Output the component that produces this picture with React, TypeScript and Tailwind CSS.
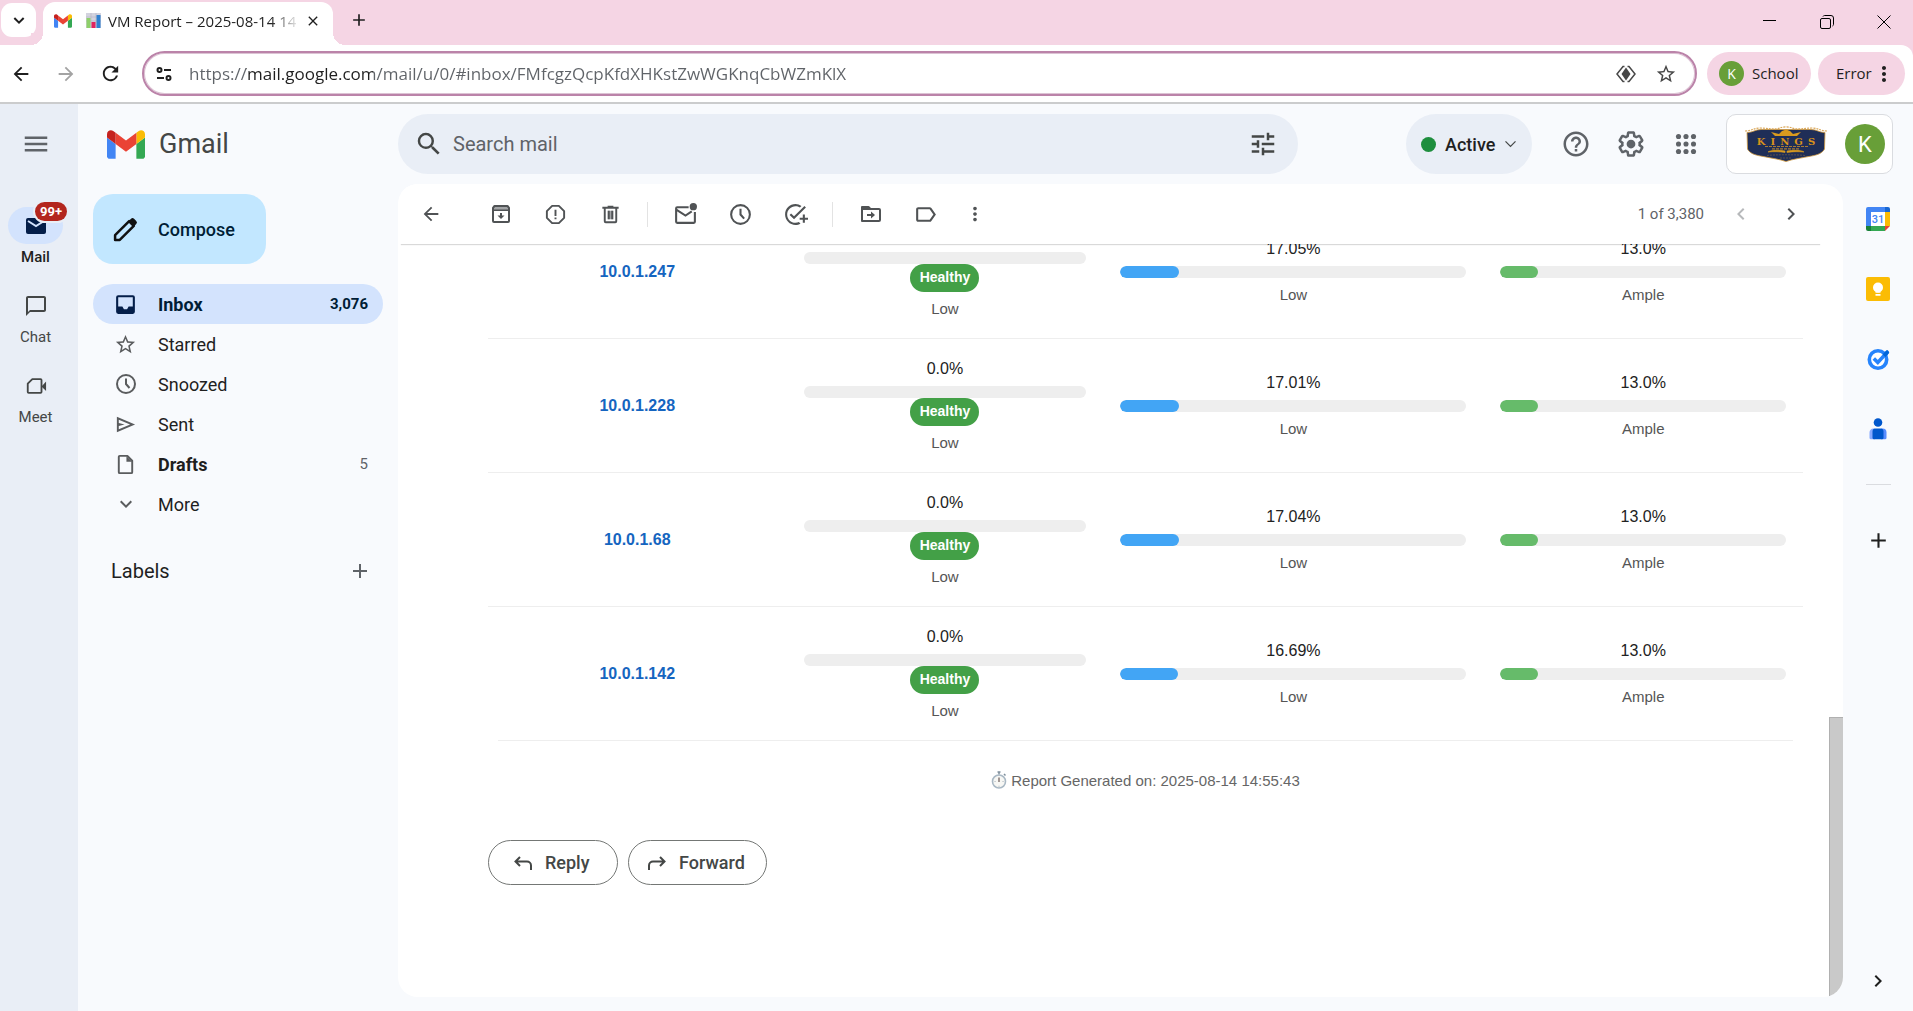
import type { ReactNode } from "react";
import {
  MdAdd,
  MdArrowBack,
  MdArrowForward,
  MdChatBubbleOutline,
  MdChevronLeft,
  MdChevronRight,
  MdClose,
  MdExpandMore,
  MdHelpOutline,
  MdLabelOutline,
  MdMenu,
  MdMoreVert,
  MdOutlineAddTask,
  MdRefresh,
  MdSearch,
  MdStarBorder,
  MdTune,
} from "react-icons/md";

type Draw = { className?: string; children?: ReactNode };

function Glyph({ className, children }: Draw) {
  return (
    <svg viewBox="0 0 24 24" fill="none" stroke="currentColor" strokeWidth="2" className={className} aria-hidden="true">
      {children}
    </svg>
  );
}

function GmailLogo({ className }: Draw) {
  return (
    <svg viewBox="52 42 88 66" className={className} aria-hidden="true">
      <path fill="#4285f4" d="M58 108h14V74L52 59v43c0 3.32 2.69 6 6 6" />
      <path fill="#34a853" d="M120 108h14c3.32 0 6-2.69 6-6V59l-20 15" />
      <path fill="#fbbc04" d="M120 48v26l20-15v-8c0-7.42-8.47-11.65-14.4-7.2" />
      <path fill="#ea4335" d="M72 74V48l24 18 24-18v26L96 92" />
      <path fill="#c5221f" d="M52 51v8l20 15V48l-5.6-4.2c-5.94-4.45-14.4-.22-14.4 7.2" />
    </svg>
  );
}

function ChartEmoji() {
  return (
    <svg viewBox="0 0 15 15" className="h-[15px] w-[15px] shrink-0" aria-hidden="true">
      <rect width="15" height="15" fill="#d3d3de" />
      <path d="M0 4h15M0 8h15M5 0v15M10 0v15" stroke="#b4b4c4" strokeWidth="0.6" />
      <rect x="0.5" y="5" width="4" height="10" fill="#8fd06a" />
      <rect x="5.5" y="9" width="4" height="6" fill="#e0245e" />
      <rect x="10.5" y="2" width="4" height="13" fill="#2f80d0" />
    </svg>
  );
}

function Stopwatch() {
  return (
    <svg viewBox="0 0 16 18" className="h-[18px] w-4" aria-hidden="true">
      <path d="M8 0.5v3M6.5 1h3M13 3l1.5 1.5" stroke="#7f8f9c" strokeWidth="1.5" fill="none" />
      <circle cx="8" cy="10.5" r="6.5" fill="#f7f7f4" stroke="#a9b8c4" strokeWidth="1.6" />
      <path d="M8 6.5v4.5" stroke="#5b4a45" strokeWidth="1.1" />
      <path d="M8 14.8v.9M3.6 10.5h.9M11.6 10.5h.9" stroke="#8b98a3" strokeWidth="0.8" />
    </svg>
  );
}

const ClockIcon = ({ className }: Draw) => (
  <Glyph className={className}>
    <circle cx="12" cy="12" r="9" />
    <path d="M12 6.5V12l3.5 4" />
  </Glyph>
);

const ArchiveIcon = ({ className }: Draw) => (
  <Glyph className={className}>
    <path d="M4 5h16v3.5H4z" fill="#a3a5a7" stroke="none" />
    <path d="M5.5 4h13L20 5.8V19a1 1 0 0 1-1 1H5a1 1 0 0 1-1-1V5.8z" strokeLinejoin="round" />
    <path d="M4 8.2h16" strokeWidth="1.4" />
    <path d="M12 11v3" />
    <path d="M8.500 13.500h7L12 17z" fill="currentColor" stroke="none" />
  </Glyph>
);

const SpamIcon = ({ className }: Draw) => (
  <Glyph className={className}>
    <path d="M8.500 3h7l5.500 5.500v7L15.500 21h-7L3 15.500v-7z" strokeLinejoin="round" />
    <path d="M12 7v6.500M12 15v2" />
  </Glyph>
);

const TrashIcon = ({ className }: Draw) => (
  <Glyph className={className}>
    <path d="M6 6v13a1 1 0 0 0 1 1h10a1 1 0 0 0 1-1V6M3.500 5h17M9 3.800h6" />
    <path d="M9 8h6v9H9z" fill="#a3a5a7" stroke="none" />
    <path d="M10.200 8v9M13.800 8v9" />
  </Glyph>
);

const UnreadIcon = ({ className }: Draw) => (
  <Glyph className={className}>
    <path d="M15 5H4a1 1 0 0 0-1 1v13a1 1 0 0 0 1 1h16a1 1 0 0 0 1-1V9.500" />
    <path d="M3.500 7.500 12 13l6-4" />
    <circle cx="19.500" cy="4.500" r="3.500" fill="currentColor" stroke="none" />
  </Glyph>
);

const MoveIcon = ({ className }: Draw) => (
  <Glyph className={className}>
    <path d="M3 19V5h6.500l2 2H20a1 1 0 0 1 1 1v10a1 1 0 0 1-1 1z" strokeLinejoin="round" />
    <path d="M3 5h6.500l2 3H3z" fill="currentColor" stroke="none" />
    <path d="M8 13h5" />
    <path d="M12 9.500v7l4-3.500z" fill="currentColor" stroke="none" />
  </Glyph>
);

const InboxIcon = ({ className }: Draw) => (
  <svg viewBox="0 0 24 24" className={className} fill="currentColor" aria-hidden="true">
    <path d="M19 3H5a2 2 0 0 0-2 2v14a2 2 0 0 0 2 2h14a2 2 0 0 0 2-2V5a2 2 0 0 0-2-2zm0 11h-4l-1.500 2.500h-3L9 14H5V5h14z" />
  </svg>
);

const SendIcon = ({ className }: Draw) => (
  <svg viewBox="0 0 24 24" className={className} fill="currentColor" aria-hidden="true">
    <path d="M3 20V4l19 8zm2-3 11.850-5L5 7v3.500l6 1.500-6 1.500z" />
  </svg>
);

const DraftIcon = ({ className }: Draw) => (
  <Glyph className={className}>
    <path d="M14 3H6a1 1 0 0 0-1 1v16a1 1 0 0 0 1 1h12a1 1 0 0 0 1-1V8z" strokeLinejoin="round" />
    <path d="M13 3v6h6z" fill="currentColor" stroke="none" />
  </Glyph>
);

const MeetIcon = ({ className }: Draw) => (
  <Glyph className={className}>
    <path d="M8 4.500h9a1 1 0 0 1 1 1v13a1 1 0 0 1-1 1H4a1 1 0 0 1-1-1V9.500z" strokeLinejoin="round" />
    <path d="M18 12.500 23 7v10.500z" fill="currentColor" stroke="none" />
  </Glyph>
);

const MailIcon = ({ className }: Draw) => (
  <svg viewBox="0 0 24 24" className={className} aria-hidden="true">
    <rect x="2" y="4" width="20" height="16" rx="2" fill="#041e49" />
    <path d="M4 7l8 5 8-5" stroke="#d3e3fd" strokeWidth="2" fill="none" />
  </svg>
);

const PencilIcon = ({ className }: Draw) => (
  <svg viewBox="0 0 24 24" className={className} aria-hidden="true">
    <path d="M2 17.500 15.500 4l4.500 4.500L6.500 22H2z" fill="none" stroke="#111" strokeWidth="2.400" strokeLinejoin="round" />
    <path d="M14.500 4.500 17.300 1.700a2 2 0 0 1 2.900 0l2.100 2.100a2 2 0 0 1 0 2.900l-2.800 2.800z" fill="#111" />
  </svg>
);

const GearIcon = ({ className }: Draw) => (
  <svg viewBox="0 0 24 24" className={className} fill="currentColor" aria-hidden="true">
    <path d="M13.850 22.250h-3.700c-.74 0-1.360-.54-1.450-1.270l-.27-1.890c-.27-.14-.53-.29-.79-.46l-1.800.72c-.7.260-1.470-.03-1.810-.65L2.200 15.530c-.35-.66-.2-1.440.36-1.880l1.530-1.190c-.01-.15-.02-.3-.02-.46 0-.15.01-.31.020-.46l-1.520-1.190c-.59-.45-.74-1.260-.37-1.880l1.850-3.190c.34-.62 1.110-.9 1.790-.63l1.810.730c.26-.17.520-.32.780-.46l.27-1.910c.09-.7.710-1.250 1.440-1.250h3.700c.74 0 1.360.54 1.450 1.270l.27 1.890c.27.14.53.29.79.46l1.800-.72c.71-.26 1.480.03 1.820.65l1.840 3.180c.36.66.2 1.440-.36 1.880l-1.520 1.190c.01.15.02.3.020.46s-.01.31-.02.46l1.520 1.190c.56.45.72 1.230.37 1.860l-1.860 3.220c-.34.62-1.110.9-1.800.63l-1.800-.72c-.26.17-.52.32-.78.46l-.27 1.910c-.1.680-.72 1.220-1.460 1.220zm-3.230-2h2.760l.37-2.550.53-.22c.44-.18.880-.44 1.340-.78l.45-.34 2.380.96 1.380-2.400-2.030-1.580.07-.56c.03-.26.06-.51.06-.78s-.03-.53-.06-.78l-.07-.56 2.030-1.580-1.390-2.400-2.390.96-.45-.35c-.42-.32-.87-.58-1.330-.77l-.52-.22-.37-2.550h-2.760l-.37 2.550-.53.21c-.44.19-.88.44-1.340.79l-.45.33-2.380-.95-1.390 2.390 2.030 1.580-.07.56a7 7 0 0 0-.06.79c0 .26.02.53.06.78l.07.56-2.030 1.580 1.380 2.400 2.390-.96.45.35c.43.33.86.58 1.330.77l.53.22z" />
    <circle cx="12" cy="12" r="3.500" />
  </svg>
);

const AppsIcon = ({ className }: Draw) => (
  <svg viewBox="0 0 24 24" className={className} fill="currentColor" aria-hidden="true">
    {[6, 12, 18].map((y) => [6, 12, 18].map((x) => <circle key={`${x}-${y}`} cx={x} cy={y} r="2.050" />))}
  </svg>
);

function CalendarLogo() {
  return (
    <svg viewBox="0 0 24 24" className="size-6" aria-hidden="true">
      <path d="M2 0h17v5H5v14H0V2a2 2 0 0 1 2-2z" fill="#4285f4" />
      <path d="M19 0h3a2 2 0 0 1 2 2v3h-5z" fill="#1967d2" />
      <path d="M19 5h5v14h-5z" fill="#fbbc04" />
      <path d="M5 19h14v5H5z" fill="#34a853" />
      <path d="M0 19h5v5H2a2 2 0 0 1-2-2z" fill="#188038" />
      <path d="M19 19h5l-5 5z" fill="#ea4335" />
      <rect x="5" y="5" width="14" height="14" fill="#fff" />
      <text x="12" y="16" textAnchor="middle" fontSize="11" fontWeight="500" fontFamily="Roboto, sans-serif" fill="#4285f4">
        31
      </text>
    </svg>
  );
}

function KeepLogo() {
  return (
    <svg viewBox="0 0 24 24" className="size-6" aria-hidden="true">
      <rect width="24" height="24" rx="2" fill="#fbbc04" />
      <circle cx="12" cy="10.500" r="5" fill="#fff" />
      <path d="M9.500 13h5v2.800h-5zM9.500 17h5v1.800h-5z" fill="#fff" />
    </svg>
  );
}

function TasksLogo() {
  return (
    <svg viewBox="0 0 24 24" className="size-6" aria-hidden="true">
      <circle cx="12" cy="12.500" r="8.700" fill="#fff" stroke="#2684fc" strokeWidth="3.600" />
      <path d="M7.800 11.500l4 4L21 5.500" fill="none" stroke="#2684fc" strokeWidth="3.600" />
      <path d="M16.500 7.500l3.500-3.800a1.500 1.500 0 0 1 2.200 0l.6.700a1.500 1.500 0 0 1 0 2L19.500 10z" fill="#0066da" />
    </svg>
  );
}

function ContactsLogo() {
  return (
    <svg viewBox="0 0 24 24" className="size-6" aria-hidden="true">
      <circle cx="12" cy="5.500" r="4.300" fill="#0057cc" />
      <path d="M7.500 11.500H9v10.700H5a1.500 1.500 0 0 1-1.500-1.500v-5a4 4 0 0 1 4-4.200z" fill="#86a9ff" />
      <path d="M15 11.500h1.500a4 4 0 0 1 4 4v5.200a1.500 1.500 0 0 1-1.500 1.500h-4z" fill="#578cff" />
      <path d="M9.500 11.500h5a3 3 0 0 1 3 3v6.200a1.500 1.500 0 0 1-1.500 1.500H8a1.500 1.500 0 0 1-1.500-1.500v-6.200a3 3 0 0 1 3-3z" fill="#0057cc" />
    </svg>
  );
}

function SchoolCrest() {
  return (
    <svg viewBox="0 0 82 36" className="h-9 w-[82px]" role="img" aria-label="Kings school crest">
      <path
        d="M2 6.500C8 6.500 10 3.500 16 3.500h50c6 0 8 3 14 3l-.5 16.500c-2 4-7 6-13 7-10 2-18 3-25.500 5.500-7.500-2.500-15.500-3.500-25.500-5.500-6-1-11-3-13-7z"
        fill="#1f2e57"
        stroke="#d0993f"
        strokeWidth="0.8"
      />
      <path d="M0 5c6 0 9-3 15-3 8 0 14 2 20 0 3-1.500 9-1.500 12 0 6 2 12 0 20 0 6 0 9 3 15 3" fill="none" stroke="#dba85a" strokeWidth="1.200" strokeDasharray="2 1" />
      <path d="M30 10l-4-4 8 2 3-3 4-1.500L45 5l3 3 8-2-4 4z" fill="#d99a1f" />
      <text x="41" y="18.500" textAnchor="middle" fontSize="10" fontWeight="700" fontFamily="DejaVu Serif, serif" fill="#d8921a">
        {"K\u2002I\u2002N\u2002G\u2002S"}
      </text>
      <path d="M20 20.500h43M27 22.800h28" stroke="#a87a33" strokeWidth="1.200" strokeDasharray="3 1" />
      <path d="M23 26c2-2 12-2 17-1v1.500c-6-1-11-1-17-.5zM42 25c5-1 15-1 17 1-6-.5-11-.5-17 .5z" fill="#d99a1f" stroke="#d99a1f" strokeWidth="0.600" />
      <path d="M22 29.500c8-1 30-1 38 0M35 32h12" stroke="#6d5a46" fill="none" strokeWidth="0.800" strokeDasharray="2 1" />
    </svg>
  );
}

/* ---------- Browser chrome ---------- */

function TabStrip() {
  return (
    <div className="flex h-[45px] shrink-0 items-end bg-[#f5d5e4]">
      <button aria-label="Search tabs" className="mb-2 ml-px flex h-[34px] w-[35px] items-center justify-center rounded-[11px] bg-white">
        <Glyph className="size-4">
          <path d="M5 9l7 7 7-7" strokeWidth="3" />
        </Glyph>
      </button>
      <div className="relative ml-[7px] flex h-[43px] w-[290px] items-center rounded-t-[12px] bg-white pb-[6px] pl-[11px] pr-3">
        <span className="absolute -left-3 bottom-0 size-3 bg-[radial-gradient(circle_at_0_0,#f5d5e4_12px,#fff_12px)]" />
        <span className="absolute -right-3 bottom-0 size-3 bg-[radial-gradient(circle_at_100%_0,#f5d5e4_12px,#fff_12px)]" />
        <GmailLogo className="mr-3.5 h-3.5 w-[18px] shrink-0" />
        <ChartEmoji />
        <span className="ml-[7px] whitespace-nowrap bg-[linear-gradient(to_right,#1f1f1f_163px,transparent_192px)] bg-clip-text text-[15px] leading-5 text-transparent">
          VM Report – 2025-08-14 14
        </span>
        <button aria-label="Close tab" className="ml-auto">
          <MdClose className="size-4" />
        </button>
      </div>
      <button aria-label="New tab" className="mb-[15px] ml-4">
        <MdAdd className="size-5" />
      </button>
      <div className="mb-2 ml-auto mr-[14px] flex items-center gap-[27px] text-black">
        <button aria-label="Minimize" className="flex size-[30px] items-center justify-center">
          <svg viewBox="0 0 14 14" className="size-3.5" aria-hidden="true">
            <path d="M0 5.500h13" stroke="currentColor" />
          </svg>
        </button>
        <button aria-label="Restore" className="flex size-[30px] items-center justify-center">
          <svg viewBox="0 0 14 14" className="size-3.5" fill="none" stroke="currentColor" aria-hidden="true">
            <rect x="0.500" y="3.500" width="10" height="10" rx="1.500" />
            <path d="M3 1.500c.3-.6.800-1 1.500-1H11A2.500 2.500 0 0 1 13.500 3v6.500c0 .7-.4 1.200-1 1.500" />
          </svg>
        </button>
        <button aria-label="Close window" className="flex size-[30px] items-center justify-center">
          <svg viewBox="0 0 14 14" className="size-3.5" stroke="currentColor" aria-hidden="true">
            <path d="M.5.5l13 13M13.500.5l-13 13" />
          </svg>
        </button>
      </div>
    </div>
  );
}

function AddressBar() {
  return (
    <div className="shrink-0 border-b-2 border-[#cbcccd] bg-[#f5d5e4]">
      <div className="flex h-[57px] items-center rounded-tr-[12px] bg-white pr-2">
        <div className="flex w-[142px] shrink-0 items-center justify-between pl-[10px] pr-5">
          <button aria-label="Back">
            <MdArrowBack className="size-[22px]" />
          </button>
          <button aria-label="Forward" className="text-[#a3a3a3]">
            <MdArrowForward className="size-[22px]" />
          </button>
          <button aria-label="Reload">
            <MdRefresh className="size-[23px]" />
          </button>
        </div>
        <div className="flex h-[45px] min-w-0 flex-1 items-center rounded-full border-2 border-[#bb83a9] pl-3 pr-[18px] shadow-[inset_0_0_0_1px_#dcc3d4]">
          <button aria-label="View site information">
            <svg viewBox="0 0 16 16" className="size-4" fill="none" stroke="#1f1f1f" strokeWidth="2" aria-hidden="true">
              <circle cx="3.500" cy="4" r="2" />
              <path d="M8 4h7M1 12h7" />
              <circle cx="12.500" cy="12" r="2" />
            </svg>
          </button>
          <input
            aria-label="Address"
            readOnly
            value="https://mail.google.com/mail/u/0/#inbox/FMfcgzQcpKfdXHKstZwWGKnqCbWZmKlX"
            className="ml-[17px] min-w-0 flex-1 bg-[linear-gradient(to_right,#5f6368_57px,#1f1f1f_57px,#1f1f1f_184px,#5f6368_184px)] bg-clip-text text-[17px] text-transparent outline-none"
          />
          <button aria-label="Google Lens" className="text-[#474747]">
            <svg viewBox="0 0 20 18" className="h-[18px] w-5" fill="none" stroke="currentColor" strokeWidth="1.500" aria-hidden="true">
              <path d="M8.500 1.500H7L1 9l6 7.500h1.500M11.500 1.500H13L19 9l-6 7.500h-1.500" />
              <path d="M10 2.500l4.500 6.500L10 15.500 5.500 9z" fill="currentColor" stroke="none" />
            </svg>
          </button>
          <button aria-label="Bookmark this tab" className="ml-[19px] text-[#474747]">
            <MdStarBorder className="size-[22px]" />
          </button>
        </div>
        <button className="ml-[10px] flex h-[43px] w-[104px] items-center gap-2 rounded-full bg-[#f5d5e4] pl-3 text-[15px]">
          <span className="flex size-[25px] items-center justify-center rounded-full bg-[#689f38] text-[14px] text-white">K</span>
          School
        </button>
        <button className="ml-[7px] flex h-[43px] w-[87px] items-center rounded-full bg-[#f5d5e4] pl-[18px] text-[15px]">
          Error
          <MdMoreVert className="size-6" />
        </button>
      </div>
    </div>
  );
}

/* ---------- Mail application ---------- */

function RailItem({ label, active, children }: { label: string; active?: boolean; children: ReactNode }) {
  return (
    <a href="#" className="flex h-20 w-full flex-col items-center text-[15px] text-[#444746]">
      <span className={active ? "relative flex h-[37px] w-[55px] items-center justify-center rounded-full bg-[#d3e3fd]" : "relative flex h-[37px] w-[55px] items-center justify-center"}>
        {children}
      </span>
      <span className={active ? "mt-[3px] leading-5 font-medium text-[#1f1f1f]" : "mt-[3px] leading-5"}>{label}</span>
    </a>
  );
}

function AppRail() {
  return (
    <aside className="flex w-[78px] shrink-0 flex-col bg-[#e9eef6] pr-[7px]">
      <button aria-label="Main menu" className="flex h-20 items-center justify-center text-[#5f6368]">
        <MdMenu className="size-[30px]" />
      </button>
      <nav aria-label="Apps" className="mt-[23px]">
        <RailItem label="Mail" active>
          <MailIcon className="size-6" />
          <span className="absolute -right-1 -top-[5px] flex h-[19px] items-center rounded-full bg-[#b3261e] px-[5px] text-[13px] font-bold text-white ring-2 ring-[#e9eef6]">
            99+
          </span>
        </RailItem>
        <RailItem label="Chat">
          <MdChatBubbleOutline className="size-6" />
        </RailItem>
        <RailItem label="Meet">
          <MeetIcon className="size-[22px]" />
        </RailItem>
      </nav>
    </aside>
  );
}

function Header() {
  return (
    <header className="flex h-20 shrink-0 items-center pr-5">
      <a href="#" className="flex w-80 shrink-0 items-center gap-3.5 pl-[29px] text-[27px] text-[#444746]">
        <GmailLogo className="h-[29px] w-[38px]" />
        Gmail
      </a>
      <form role="search" className="flex h-[60px] max-w-[900px] flex-1 items-center rounded-full bg-[#e9eef6] pl-4 pr-5">
        <button type="button" aria-label="Search" className="text-[#444746]">
          <MdSearch className="size-[30px]" />
        </button>
        <input aria-label="Search mail" placeholder="Search mail" className="ml-[9px] min-w-0 flex-1 text-[20px] outline-none placeholder:text-[#5f6368]" />
        <button type="button" aria-label="Advanced search options" className="text-[#444746]">
          <MdTune className="size-[30px]" />
        </button>
      </form>
      <div className="ml-auto flex items-center">
        <button className="flex h-[60px] w-[126px] items-center rounded-full bg-[#e9eef6] pl-[15px] text-[18px] font-medium text-[#1f1f1f]">
          <span className="mr-[9px] size-[15px] rounded-full bg-[#1e8e3e]" />
          Active
          <Glyph className="ml-2 size-[15px] text-[#444746]">
            <path d="M4 7l8 8 8-8" />
          </Glyph>
        </button>
        <div className="ml-4 mr-[13px] flex text-[#5f6368]">
          <button aria-label="Support" className="flex h-[55px] w-[55px] items-center justify-center">
            <MdHelpOutline className="size-[30px]" />
          </button>
          <button aria-label="Settings" className="flex h-[55px] w-[55px] items-center justify-center">
            <GearIcon className="size-[30px]" />
          </button>
          <button aria-label="Google apps" className="flex h-[55px] w-[55px] items-center justify-center">
            <AppsIcon className="size-[30px]" />
          </button>
        </div>
        <div className="flex h-[60px] w-[167px] items-center rounded-[10px] border border-[#dadce0] bg-white pl-[18px] pr-[7px]">
          <SchoolCrest />
          <button aria-label="Google Account" className="ml-auto flex size-10 items-center justify-center rounded-full bg-[#689f38] text-[22px] text-white">
            K
          </button>
        </div>
      </div>
    </header>
  );
}

const folders = [
  { name: "Starred", icon: <MdStarBorder className="size-[23px]" /> },
  { name: "Snoozed", icon: <ClockIcon className="size-6" /> },
  { name: "Sent", icon: <SendIcon className="size-[23px]" /> },
  { name: "Drafts", count: "5", bold: true, icon: <DraftIcon className="size-[23px]" /> },
  { name: "More", icon: <MdExpandMore className="size-6" /> },
];

function Folders() {
  return (
    <nav aria-label="Mailboxes" className="w-80 shrink-0 pl-[15px] pr-[15px] text-[18px] text-[#1f1f1f]">
      <button className="mt-[10px] flex h-[70px] w-[173px] items-center gap-[20px] rounded-[20px] bg-[#c2e7ff] pl-5 font-medium text-[#001d35]">
        <PencilIcon className="size-[25px]" />
        Compose
      </button>
      <ul className="mt-5">
        <li>
          <a href="#" className="flex h-10 items-center rounded-full bg-[#d3e3fd] pl-5 pr-[15px] font-bold text-[#001d35]">
            <span className="flex w-[25px] justify-center text-[#041e49]">
              <InboxIcon className="size-[25px]" />
            </span>
            <span className="ml-5 flex-1">Inbox</span>
            <span className="text-[15px]">3,076</span>
          </a>
        </li>
        {folders.map((f) => (
          <li key={f.name}>
            <a href="#" className="flex h-10 items-center pl-5 pr-[15px]">
              <span className="flex w-[25px] justify-center text-[#5a5c5e]">{f.icon}</span>
              <span className={f.bold ? "ml-5 flex-1 font-bold" : "ml-5 flex-1"}>{f.name}</span>
              {f.count && <span className="text-[15px] text-[#5f6368]">{f.count}</span>}
            </a>
          </li>
        ))}
      </ul>
      <div className="mt-8 flex h-[30px] items-center justify-between pl-[18px] pr-[11px]">
        <h2 className="text-[20px]">Labels</h2>
        <button aria-label="Create new label" className="text-[#5f6368]">
          <MdAdd className="size-6" />
        </button>
      </div>
    </nav>
  );
}

function Tool({ label, children }: { label: string; children: ReactNode }) {
  return (
    <button aria-label={label} className="flex h-10 w-[55px] items-center justify-center">
      {children}
    </button>
  );
}

function Toolbar() {
  return (
    <div className="relative z-10 ml-0.5 mr-[22px] flex h-[60px] shrink-0 items-center bg-white pl-[3px] text-[#505355] shadow-[0_2px_1px_-1px_rgba(0,0,0,0.15)]">
      <Tool label="Back to Inbox">
        <MdArrowBack className="size-[22px]" />
      </Tool>
      <div className="ml-[15px] flex">
        <Tool label="Archive">
          <ArchiveIcon className="size-6" />
        </Tool>
        <Tool label="Report spam">
          <SpamIcon className="size-[23px]" />
        </Tool>
        <Tool label="Delete">
          <TrashIcon className="size-[23px]" />
        </Tool>
      </div>
      <span className="ml-[9px] mr-2.5 h-[25px] w-px bg-[#e3e3e3]" />
      <Tool label="Mark as unread">
        <UnreadIcon className="size-[25px]" />
      </Tool>
      <Tool label="Snooze">
        <ClockIcon className="size-[25px]" />
      </Tool>
      <Tool label="Add to Tasks">
        <MdOutlineAddTask className="size-[25px]" />
      </Tool>
      <span className="ml-[9px] mr-2.5 h-[25px] w-px bg-[#e3e3e3]" />
      <Tool label="Move to">
        <MoveIcon className="size-6" />
      </Tool>
      <Tool label="Labels">
        <MdLabelOutline className="size-[25px]" />
      </Tool>
      <button aria-label="More" className="flex h-10 w-11 items-center justify-center">
        <MdMoreVert className="size-[22px]" />
      </button>
      <span className="ml-auto mr-3 text-[15px] text-[#5f6368]">1 of 3,380</span>
      <button aria-label="Newer" disabled className="flex h-10 w-[50px] items-center justify-center text-[#b7b9bb]">
        <MdChevronLeft className="size-6" />
      </button>
      <button aria-label="Older" className="mr-[5px] flex h-10 w-[50px] items-center justify-center">
        <MdChevronRight className="size-6" />
      </button>
    </div>
  );
}

const machines = [
  { ip: "10.0.1.247", cpu: 0, memory: "17.05", disk: "13.0" },
  { ip: "10.0.1.228", cpu: 0, memory: "17.01", disk: "13.0" },
  { ip: "10.0.1.68", cpu: 0, memory: "17.04", disk: "13.0" },
  { ip: "10.0.1.142", cpu: 0, memory: "16.69", disk: "13.0" },
];

function Usage({ value, fill, note, badge }: { value: string; fill: string; note: string; badge?: string }) {
  return (
    <td className="px-[17px] pt-0.5 text-center align-middle">
      <div className="text-[16px] leading-[18px] text-[#222]">{value}%</div>
      <div className="mt-2 h-3 overflow-hidden rounded-full bg-[#eee]">
        <div className={fill} style={{ width: `${value}%` }} />
      </div>
      {badge && (
        <div className="mx-auto h-7 w-[69px] rounded-full bg-[#43a047] text-[14px] leading-[26px] font-bold text-white">{badge}</div>
      )}
      <div className="mt-2 text-[15px] leading-[18px] text-[#555]">{note}</div>
    </td>
  );
}

function Message() {
  return (
    <div className="flex min-h-0 flex-1">
      <div className="flex min-w-0 flex-1 flex-col justify-end overflow-hidden pb-28 pl-[90px] pr-[26px]">
        <div className="shrink-0 font-['Liberation_Sans',Arial,sans-serif]">
          <table className="w-full table-fixed border-collapse">
            <colgroup>
              <col className="w-[22.7%]" />
              <col className="w-[24.1%]" />
              <col className="w-[28.9%]" />
              <col className="w-[24.3%]" />
            </colgroup>
            <tbody>
              {machines.map((m) => (
                <tr key={m.ip} className="h-[134px] border-b border-[#eee] last:border-b-0">
                  <th scope="row" className="pt-0.5 text-center text-[16px] font-bold text-[#1565c0]">
                    {m.ip}
                  </th>
                  <Usage value={m.cpu.toFixed(1)} fill="h-full rounded-full bg-[#66bb6a]" note="Low" badge="Healthy" />
                  <Usage value={m.memory} fill="h-full rounded-full bg-[#42a5f5]" note="Low" />
                  <Usage value={m.disk} fill="h-full rounded-full bg-[#66bb6a]" note="Ample" />
                </tr>
              ))}
            </tbody>
          </table>
          <p className="mx-2.5 flex h-[100px] items-start justify-center gap-1 border-t border-[#eee] pt-[30px] text-[15px] leading-5 text-[#666]">
            <Stopwatch />
            Report Generated on: 2025-08-14 14:55:43
          </p>
        </div>
        <div className="flex shrink-0 gap-2.5 text-[18px] font-medium text-[#444746]">
          <button className="flex h-[45px] w-[130px] items-center gap-2.5 rounded-full border border-[#747775] pl-[22px]">
            <Glyph className="size-6">
              <path d="M9 6 4.500 10.500 9 15M4.500 10.500H16a4 4 0 0 1 4 4V19" />
            </Glyph>
            Reply
          </button>
          <button className="flex h-[45px] w-[139px] items-center gap-2.5 rounded-full border border-[#747775] pl-4">
            <Glyph className="size-6">
              <path d="M15 6l4.500 4.500L15 15M19.500 10.500H8a4 4 0 0 0-4 4V19" />
            </Glyph>
            Forward
          </button>
        </div>
      </div>
      <div className="flex w-3.5 shrink-0 items-end">
        <div className="h-[280px] w-full border-l border-t border-[#b0b0b0] bg-[#c9c9c9]" />
      </div>
    </div>
  );
}

function SidePanel() {
  return (
    <aside aria-label="Side panel" className="flex w-[70px] shrink-0 flex-col items-center pb-[18px] pt-[23px]">
      <div className="flex flex-col gap-[46px]">
        <button aria-label="Calendar">
          <CalendarLogo />
        </button>
        <button aria-label="Keep">
          <KeepLogo />
        </button>
        <button aria-label="Tasks">
          <TasksLogo />
        </button>
        <button aria-label="Contacts">
          <ContactsLogo />
        </button>
      </div>
      <span className="mt-[43px] h-px w-[25px] bg-[#dadce0]" />
      <button aria-label="Get add-ons" className="mt-[43px]">
        <MdAdd className="size-[25px]" />
      </button>
      <button aria-label="Hide side panel" className="mt-auto">
        <MdChevronRight className="size-6" />
      </button>
    </aside>
  );
}

export default function App() {
  return (
    <div className="flex h-screen flex-col overflow-hidden bg-[#f8fafd] font-['Open_Sans',sans-serif] text-[#1f1f1f]">
      <TabStrip />
      <AddressBar />
      <div className="flex min-h-0 flex-1 font-[Roboto,sans-serif]">
        <AppRail />
        <div className="flex min-w-0 flex-1 flex-col">
          <Header />
          <div className="flex min-h-0 flex-1">
            <Folders />
            <main className="mb-3.5 flex min-w-0 flex-1 flex-col overflow-hidden rounded-[20px] bg-white">
              <Toolbar />
              <Message />
            </main>
            <SidePanel />
          </div>
        </div>
      </div>
    </div>
  );
}
